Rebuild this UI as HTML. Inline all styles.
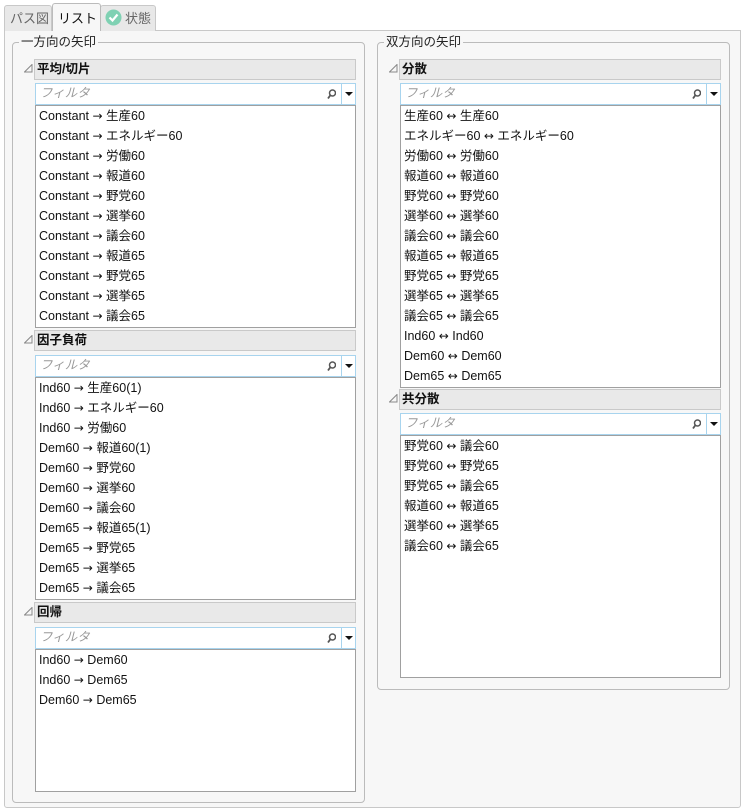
<!DOCTYPE html>
<html><head><meta charset="utf-8"><style>
*{box-sizing:border-box;margin:0;padding:0}
body{width:742px;height:810px;background:#fff;font-family:"Liberation Sans","Noto Sans CJK JP",sans-serif;font-size:12.5px;color:#111;position:relative;overflow:hidden}
.a{position:absolute}
.tab{position:absolute;top:5px;height:26px;border:1px solid #c8c8c8;border-bottom:none;background:#e8e8e8;border-radius:3px 3px 0 0;color:#666;font-size:13px;padding:2px 0 0 5px}
.panel{position:absolute;left:4px;top:30px;width:737px;height:778px;background:#f7f7f7;border:1px solid #c8c8c8;border-radius:0 0 3px 3px}
.grp{position:absolute;border:1px solid #bbb;border-radius:4px}
.leg{position:absolute;top:-9px;left:6px;background:#f7f7f7;padding:0 2px;font-size:12.5px;color:#222;line-height:16px}
.hd{position:absolute;height:21px;background:#e9e9e9;border:1px solid #c9c9c9;font-weight:bold;padding:0 0 0 2px;line-height:18px}
.tri{position:absolute}
.fl{position:absolute;height:22px;border:1px solid #a8d4ee;background:#fff;color:#999;font-style:italic;padding:0 0 0 4px;line-height:19px}
.fl .dd{position:absolute;right:0;top:0;width:14px;height:20px;border-left:1px solid #a8d4ee}
.fl .dd::after{content:"";position:absolute;left:3px;top:8px;border-left:4px solid transparent;border-right:4px solid transparent;border-top:4px solid #111}
.fl .mg{position:absolute;right:19px;top:5px}
.ls{position:absolute;border:1px solid #a0a0a0;background:#fff;padding:0 0 0 3px}
.ls div{height:20px;line-height:20px;white-space:nowrap}
.ar{font-family:"DejaVu Sans",sans-serif;font-size:12px}
</style></head><body>
<div class="panel"></div>
<div class="tab" style="left:4px;width:48px">パス図</div>
<div class="tab" style="left:100px;width:56px;padding-left:24px">状態<svg class="a" style="left:4px;top:3px" width="17" height="17"><circle cx="8.5" cy="8.5" r="8" fill="#7fd1b3"/><path d="M4.5 8.5l3 3 5-6" stroke="#fff" stroke-width="2.2" fill="none"/></svg></div>
<div class="tab" style="left:52px;top:3px;width:49px;height:28px;background:#f7f7f7;color:#111;border-color:#bbb;padding-top:4px">リスト</div>

<div class="grp" style="left:12px;top:42px;width:353px;height:761px"><span class="leg">一方向の矢印</span></div>
<div class="grp" style="left:377px;top:42px;width:353px;height:648px"><span class="leg">双方向の矢印</span></div>

<!-- left sec1 -->
<svg class="tri" style="left:24px;top:64px" width="9" height="9"><path d="M8 0.5V8H0.5Z" fill="none" stroke="#888"/></svg>
<div class="hd" style="left:34px;top:59px;width:322px">平均/切片</div>
<div class="fl" style="left:35px;top:83px;width:321px">フィルタ<svg class="mg" width="9" height="11"><circle cx="5.5" cy="4" r="3" stroke="#555" stroke-width="1.5" fill="none"/><path d="M3.5 6L1 9.5" stroke="#555" stroke-width="1.8"/></svg><span class="dd"></span></div>
<div class="ls" style="left:35px;top:105px;width:321px;height:223px">
<div>Constant <span class="ar">→</span> 生産60</div><div>Constant <span class="ar">→</span> エネルギー60</div><div>Constant <span class="ar">→</span> 労働60</div><div>Constant <span class="ar">→</span> 報道60</div><div>Constant <span class="ar">→</span> 野党60</div><div>Constant <span class="ar">→</span> 選挙60</div><div>Constant <span class="ar">→</span> 議会60</div><div>Constant <span class="ar">→</span> 報道65</div><div>Constant <span class="ar">→</span> 野党65</div><div>Constant <span class="ar">→</span> 選挙65</div><div>Constant <span class="ar">→</span> 議会65</div></div>

<svg class="tri" style="left:24px;top:335px" width="9" height="9"><path d="M8 0.5V8H0.5Z" fill="none" stroke="#888"/></svg>
<div class="hd" style="left:34px;top:330px;width:322px">因子負荷</div>
<div class="fl" style="left:35px;top:355px;width:321px">フィルタ<svg class="mg" width="9" height="11"><circle cx="5.5" cy="4" r="3" stroke="#555" stroke-width="1.5" fill="none"/><path d="M3.5 6L1 9.5" stroke="#555" stroke-width="1.8"/></svg><span class="dd"></span></div>
<div class="ls" style="left:35px;top:377px;width:321px;height:223px">
<div>Ind60 <span class="ar">→</span> 生産60(1)</div><div>Ind60 <span class="ar">→</span> エネルギー60</div><div>Ind60 <span class="ar">→</span> 労働60</div><div>Dem60 <span class="ar">→</span> 報道60(1)</div><div>Dem60 <span class="ar">→</span> 野党60</div><div>Dem60 <span class="ar">→</span> 選挙60</div><div>Dem60 <span class="ar">→</span> 議会60</div><div>Dem65 <span class="ar">→</span> 報道65(1)</div><div>Dem65 <span class="ar">→</span> 野党65</div><div>Dem65 <span class="ar">→</span> 選挙65</div><div>Dem65 <span class="ar">→</span> 議会65</div></div>

<svg class="tri" style="left:24px;top:607px" width="9" height="9"><path d="M8 0.5V8H0.5Z" fill="none" stroke="#888"/></svg>
<div class="hd" style="left:34px;top:602px;width:322px">回帰</div>
<div class="fl" style="left:35px;top:627px;width:321px">フィルタ<svg class="mg" width="9" height="11"><circle cx="5.5" cy="4" r="3" stroke="#555" stroke-width="1.5" fill="none"/><path d="M3.5 6L1 9.5" stroke="#555" stroke-width="1.8"/></svg><span class="dd"></span></div>
<div class="ls" style="left:35px;top:649px;width:321px;height:143px">
<div>Ind60 <span class="ar">→</span> Dem60</div><div>Ind60 <span class="ar">→</span> Dem65</div><div>Dem60 <span class="ar">→</span> Dem65</div></div>

<!-- right -->
<svg class="tri" style="left:389px;top:64px" width="9" height="9"><path d="M8 0.5V8H0.5Z" fill="none" stroke="#888"/></svg>
<div class="hd" style="left:399px;top:59px;width:322px">分散</div>
<div class="fl" style="left:400px;top:83px;width:321px">フィルタ<svg class="mg" width="9" height="11"><circle cx="5.5" cy="4" r="3" stroke="#555" stroke-width="1.5" fill="none"/><path d="M3.5 6L1 9.5" stroke="#555" stroke-width="1.8"/></svg><span class="dd"></span></div>
<div class="ls" style="left:400px;top:105px;width:321px;height:283px">
<div>生産60 <span class="ar">↔</span> 生産60</div><div>エネルギー60 <span class="ar">↔</span> エネルギー60</div><div>労働60 <span class="ar">↔</span> 労働60</div><div>報道60 <span class="ar">↔</span> 報道60</div><div>野党60 <span class="ar">↔</span> 野党60</div><div>選挙60 <span class="ar">↔</span> 選挙60</div><div>議会60 <span class="ar">↔</span> 議会60</div><div>報道65 <span class="ar">↔</span> 報道65</div><div>野党65 <span class="ar">↔</span> 野党65</div><div>選挙65 <span class="ar">↔</span> 選挙65</div><div>議会65 <span class="ar">↔</span> 議会65</div><div>Ind60 <span class="ar">↔</span> Ind60</div><div>Dem60 <span class="ar">↔</span> Dem60</div><div>Dem65 <span class="ar">↔</span> Dem65</div></div>

<svg class="tri" style="left:389px;top:394px" width="9" height="9"><path d="M8 0.5V8H0.5Z" fill="none" stroke="#888"/></svg>
<div class="hd" style="left:399px;top:389px;width:322px">共分散</div>
<div class="fl" style="left:400px;top:413px;width:321px">フィルタ<svg class="mg" width="9" height="11"><circle cx="5.5" cy="4" r="3" stroke="#555" stroke-width="1.5" fill="none"/><path d="M3.5 6L1 9.5" stroke="#555" stroke-width="1.8"/></svg><span class="dd"></span></div>
<div class="ls" style="left:400px;top:435px;width:321px;height:243px">
<div>野党60 <span class="ar">↔</span> 議会60</div><div>野党60 <span class="ar">↔</span> 野党65</div><div>野党65 <span class="ar">↔</span> 議会65</div><div>報道60 <span class="ar">↔</span> 報道65</div><div>選挙60 <span class="ar">↔</span> 選挙65</div><div>議会60 <span class="ar">↔</span> 議会65</div></div>
</body></html>
